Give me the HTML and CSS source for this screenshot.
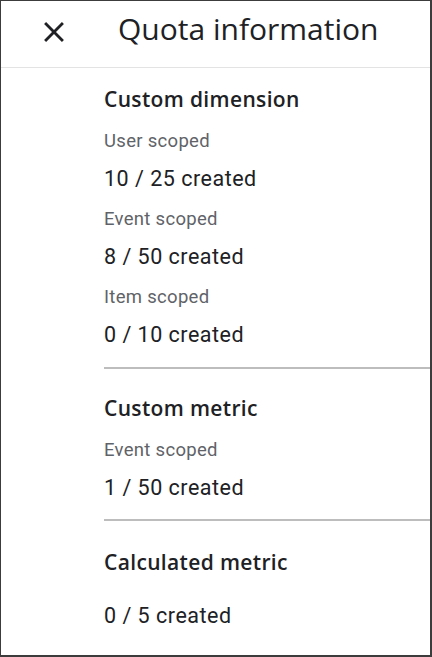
FILE: index.html
```html
<!DOCTYPE html>
<html lang="en">

<head>
    <meta charset="UTF-8">
    <meta name="viewport" content="width=device-width, initial-scale=1.0">
    <title>Quota information</title>
    <link rel="stylesheet" href="styles.css">
</head>

<body>
    <div class="panel">
        <div class="header">
            <button class="close-btn" aria-label="Close">
                <svg width="34" height="34" viewBox="0 0 24 24">
                    <path fill="#202124" d="M19 6.41L17.59 5 12 10.59 6.41 5 5 6.41 10.59 12 5 17.59 6.41 19 12 13.41 17.59 19 19 17.59 13.41 12z"/>
                </svg>
            </button>
            <h1 class="title">Quota information</h1>
        </div>

        <div class="content">
            <div class="group">
                <h2 class="group-title">Custom dimension</h2>
                <div class="label">User scoped</div>
                <div class="value">10 / 25 created</div>
                <div class="label">Event scoped</div>
                <div class="value">8 / 50 created</div>
                <div class="label">Item scoped</div>
                <div class="value">0 / 10 created</div>
            </div>

            <div class="group">
                <h2 class="group-title">Custom metric</h2>
                <div class="label">Event scoped</div>
                <div class="value">1 / 50 created</div>
            </div>

            <div class="group last">
                <h2 class="group-title spaced">Calculated metric</h2>
                <div class="value">0 / 5 created</div>
            </div>
        </div>
    </div>
</body>

</html>
```

FILE: styles.css
```css
body {
    margin: 0;
    padding: 0;
    background-color: #fff;
    font-family: Roboto, Arial, sans-serif;
}

.panel {
    width: 432px;
    height: 657px;
    box-sizing: border-box;
    border: 1px solid #3c3c3c;
    border-right-width: 2px;
    border-bottom-width: 2px;
    overflow: hidden;
    background-color: #fff;
}

.header {
    display: flex;
    align-items: flex-start;
    height: 67px;
    box-sizing: border-box;
    padding: 10px 0 0 36px;
    border-bottom: 1px solid #e3e3e3;
}

.close-btn {
    width: 34px;
    height: 34px;
    margin-top: 4px;
    padding: 0;
    border: none;
    background: none;
    cursor: pointer;
}

.close-btn svg {
    display: block;
}

.title {
    margin: 0 0 0 47px;
    font-family: "Open Sans", Arial, sans-serif;
    font-size: 30px;
    font-weight: 400;
    line-height: 36px;
    color: #202124;
}

.content {
    padding-left: 103px;
}

.group {
    padding: 25px 0 9px;
    border-bottom: 2px solid #bdbdbd;
}

.group:first-child {
    padding-top: 17px;
    padding-bottom: 10px;
}

.group.last {
    border-bottom: none;
    padding-top: 27px;
}

.group-title {
    margin: 0 0 10px;
    font-family: "Open Sans", Arial, sans-serif;
    font-size: 21px;
    font-weight: 600;
    line-height: 28px;
    letter-spacing: 0.35px;
    color: #202124;
}

.group-title.spaced {
    margin-bottom: 21px;
}

.label {
    font-size: 18.5px;
    line-height: 37px;
    letter-spacing: 0.3px;
    color: #5f6368;
}

.value {
    font-size: 21.5px;
    line-height: 37px;
    letter-spacing: 0.5px;
    margin-bottom: 4px;
    color: #202124;
}
```
